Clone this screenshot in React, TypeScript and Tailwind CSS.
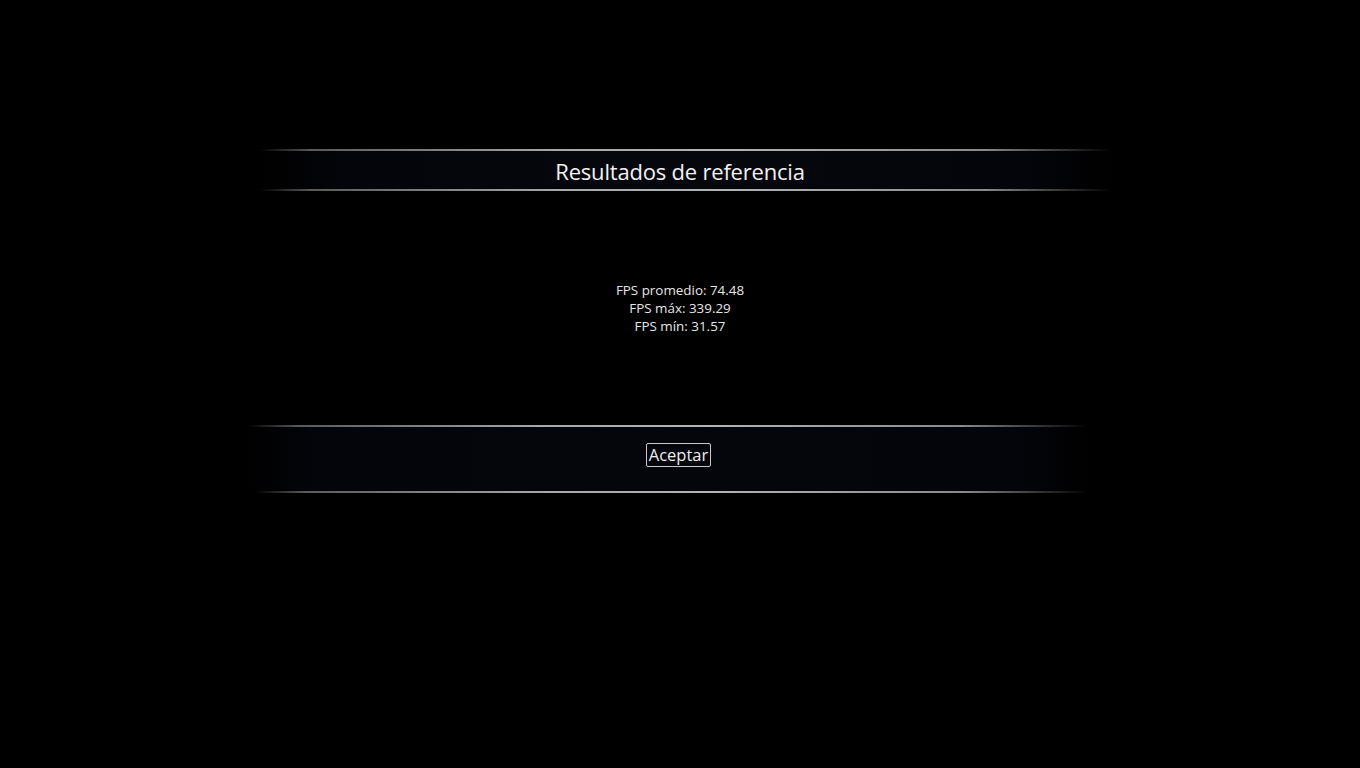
const line = "h-[2px] bg-[linear-gradient(to_right,transparent,#5a5a5a_6%,#a8a8a8_35%,#b4b4b4_55%,#8a8a8a_85%,transparent)]";

export default function App() {
  return (
    <div className="h-[768px] w-[1360px] bg-black font-['Open_Sans',sans-serif] text-white overflow-hidden">
      <div className="pt-[149px]">
        {/* Header band */}
        <div className={`ml-[260px] w-[852px] ${line}`} />
        <div className="ml-[260px] w-[852px] h-[38px] flex items-center justify-center pr-[12px] bg-[linear-gradient(to_right,transparent,#04050a_10%,#06070c_50%,#04050a_90%,transparent)]">
          <h1 className="text-[22px] leading-none tracking-[-0.2px] text-[#f2f2f2] mt-[2px]">Resultados de referencia</h1>
        </div>
        <div className={`ml-[260px] w-[852px] ${line}`} />

        {/* Stats */}
        <div className="mt-[90px] flex flex-col items-center text-[13.4px] leading-[18px] text-[#e6e6e6]">
          <div>FPS promedio: 74.48</div>
          <div>FPS máx: 339.29</div>
          <div>FPS mín: 31.57</div>
        </div>

        {/* Footer band */}
        <div className={`mt-[90px] ml-[248px] w-[840px] ${line}`} />
        <div className="ml-[248px] w-[840px] h-[64px] flex items-start justify-center pt-[16px] pl-[21px] bg-[linear-gradient(to_right,transparent,#04050a_8%,#05060b_50%,#04050a_92%,transparent)]">
          <button className="h-[24px] px-[2px] border border-[#c8c8c8] rounded-[2px] text-[16.5px] leading-none text-[#ededed]">
            Aceptar
          </button>
        </div>
        <div className={`ml-[255px] w-[833px] ${line}`} />
      </div>
    </div>
  );
}
